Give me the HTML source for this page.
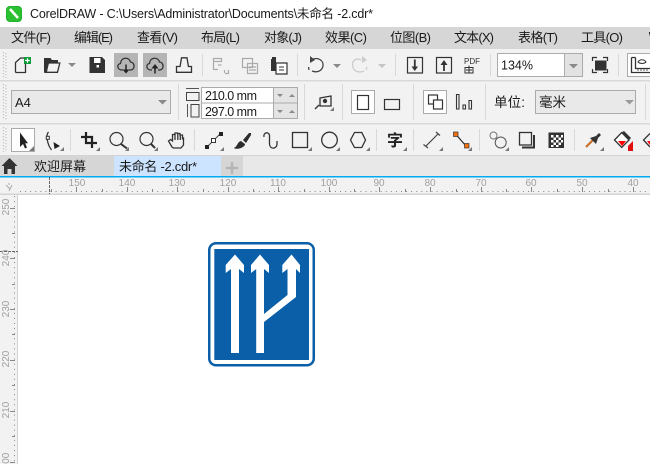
<!DOCTYPE html>
<html><head><meta charset="utf-8"><style>
html,body{margin:0;padding:0;background:#fff;width:650px;height:464px;overflow:hidden}
svg{display:block}
text{font-family:"Liberation Sans","Noto Sans CJK SC",sans-serif;fill:#1a1a1a}
.m{font-size:13px}
.r{font-size:10px;fill:#a0a0a0;text-anchor:middle}
.k{fill:none;stroke:#333;stroke-width:1.3}
.g{fill:none;stroke:#aaa;stroke-width:1.2}
.t{fill:#777}
.s{stroke:#d8d8d8;stroke-width:1}
</style></head><body>
<svg width="650" height="464" viewBox="0 0 650 464" xmlns="http://www.w3.org/2000/svg">
<rect width="650" height="464" fill="#fff"/>
<!-- title -->
<rect x="6" y="6" width="16" height="16" rx="4" fill="#1fb02c"/>
<rect x="7" y="7" width="14" height="14" rx="3" fill="#3c3" opacity=".6"/>
<path d="M10 9L18 18" stroke="#fff" stroke-width="2.6"/>
<text x="30" y="18" font-size="12.5" textLength="343" lengthAdjust="spacing">CorelDRAW - C:\Users\Administrator\Documents\未命名 -2.cdr*</text>
<!-- menu -->
<rect y="27" width="650" height="22" fill="#d6d6d6"/>
<g class="m">
<text class="m" x="11" y="42" textLength="40">文件(F)</text>
<text class="m" x="74" y="42" textLength="39">编辑(E)</text>
<text class="m" x="137" y="42" textLength="41">查看(V)</text>
<text class="m" x="201" y="42" textLength="39">布局(L)</text>
<text class="m" x="264" y="42" textLength="38">对象(J)</text>
<text class="m" x="325" y="42" textLength="42">效果(C)</text>
<text class="m" x="390" y="42" textLength="41">位图(B)</text>
<text class="m" x="454" y="42" textLength="40">文本(X)</text>
<text class="m" x="518" y="42" textLength="40">表格(T)</text>
<text class="m" x="581" y="42" textLength="42">工具(O)</text>
<text class="m" x="648" y="42">窗口</text>
</g>
<!-- toolbars bg -->
<rect y="49" width="650" height="106" fill="#f2f2f2"/>
<rect y="80" width="650" height="1.5" fill="#d9d9d9"/>
<rect y="123" width="650" height="1.5" fill="#d9d9d9"/>
<rect y="155" width="650" height="1.5" fill="#d4d4d4"/>
<path d="M3.500 52V78M6 53V78M3.500 84V120M6 85V120M3.500 127V152M6 128V152" stroke="#c4c4c4" stroke-width="1.200" stroke-dasharray="1.200 1.800"/>
<!-- row 1 -->
<path class="k" d="M15.500 72.500V62.500L20.500 58H24M25.500 64V72.500H15.500"/>
<rect x="24" y="57" width="7" height="7" fill="#0e9b3c"/><path d="M27.500 58.200V62.800M25.200 60.500H29.800" stroke="#fff" stroke-width="1.200"/>
<path d="M44 72V58H50.500L52 60H58V62.500H49L47 72Z" fill="#333"/><path class="k" d="M45 72.300L48.500 63H59.800L57.500 72.300Z"/>
<path d="M68 63H76L72 67Z" fill="#8a8a8a"/>
<path d="M89.500 57H102L105 60V73H89.500Z" fill="#333"/><rect x="94" y="58" width="6.500" height="5" fill="#fff"/><rect x="96.500" y="65" width="2.500" height="2.500" fill="#fff"/>
<rect x="114" y="53" width="24" height="24" fill="#b5b5b5"/><rect x="143" y="53" width="24" height="24" fill="#b5b5b5"/>
<path class="k" d="M123 70H122C117 70 116.500 64 120.500 63.500C121 57 129 56.500 130.500 62C135 62 135.500 70 130.500 70H129"/>
<path d="M126 64.500V70" stroke="#222" stroke-width="1.500"/><path d="M122.500 69.500H129.500L126 73.500Z" fill="#222"/>
<path class="k" d="M152 70H151C146 70 145.500 64 149.500 63.500C150 57 158 56.500 159.500 62C164 62 164.500 70 159.500 70H158"/>
<path d="M155 68V73.500" stroke="#222" stroke-width="1.500"/><path d="M151.500 68.500H158.500L155 64Z" fill="#222"/>
<path class="k" d="M180 67L181.500 57.800H187L188.500 67M180.500 66.500H176.500V72.300H191.500V66.500H188"/>
<path class="s" d="M202.500 54V76M297.500 54V76M395.500 54V76M490.500 54V76M618.500 54V76"/>
<path class="g" d="M213.500 58.500H221.500V61.500H213.500ZM213.500 61.500V69.500H218M218 65H221.500M224.500 70V73M225 73.500H228.500V70"/>
<path class="g" d="M242.500 58.500H252.500V67.500H242.500ZM247.500 63.500H257.500V73.500H247.500ZM249 67H256M249 70H256"/>
<path d="M271 59H276V71H271Z" fill="#333"/><path d="M276 63H287V74H276Z" fill="#fff" stroke="#333" stroke-width="1.200"/><path d="M279 67H284M279 70H284" stroke="#333"/><rect x="272" y="57" width="4" height="2" fill="#333"/>
<path d="M311 60C318 56 324 61 323 66C322 71 317 73 312 71M308.500 67L309 70" fill="none" stroke="#444" stroke-width="1.300"/><path d="M310 56V63L315 60Z" fill="#444"/>
<path d="M333 64H341L337 68Z" fill="#8a8a8a"/>
<path d="M361 60C355 57 351 62 353 67C354 72 360 73 364 71M367 67L366 70" fill="none" stroke="#ccc" stroke-width="1.300"/><path d="M362 56V63L367 60Z" fill="#ccc"/>
<path d="M378 64H386L382 68Z" fill="#c4c4c4"/>
<rect x="407.500" y="57.500" width="15" height="15.500" fill="none" stroke="#333" stroke-width="1.200"/><path d="M414.800 59.500V68" stroke="#333" stroke-width="1.800"/><path d="M411.500 66.500H418L414.800 71Z" fill="#333"/>
<rect x="436.500" y="57.500" width="15" height="15.500" fill="none" stroke="#333" stroke-width="1.200"/><path d="M444 64V71" stroke="#333" stroke-width="1.800"/><path d="M440.500 65H447.500L444 60Z" fill="#333"/>
<text x="464" y="64" font-size="8" style="fill:#333" textLength="16">PDF</text>
<rect x="465" y="67.500" width="8" height="5.500" fill="none" stroke="#333"/><path d="M469 65.500V73M466 70H472" stroke="#333"/>
<rect x="497.500" y="53.500" width="85" height="23" fill="#fff" stroke="#ababab"/>
<rect x="564" y="54" width="18" height="22" fill="#e2e2e2"/><path d="M564.500 54V76" stroke="#ababab"/>
<path d="M569 64H578L573.500 68.500Z" fill="#8a8a8a"/>
<text x="501" y="69.500" font-size="12.500">134%</text>
<rect x="595" y="60.500" width="11.500" height="10" fill="#333"/>
<path d="M592.500 61V57.500H597M603 57.500H607.500V61M607.500 69V72.500H603M597 72.500H592.500V69" fill="none" stroke="#333" stroke-width="1.200"/>
<rect x="627.500" y="53.500" width="24" height="23" fill="#fff" stroke="#ababab"/>
<path class="k" d="M631.500 57.500V72.500H650M635.500 57.500V68.500H650M631.500 57.500H635.500"/><path d="M638 62C640 59 644 59 646 62C644 64 640 64 638 62Z" fill="none" stroke="#333"/>
<path d="M638 68.500V71M641 68.500V71M644 68.500V71M647 68.500V71" stroke="#333" stroke-width=".8"/>
<!-- row 2 -->
<rect x="11.500" y="90.500" width="159" height="23" fill="#e9e9e9" stroke="#ababab"/>
<text x="15" y="107" font-size="13">A4</text>
<path d="M158 100H167L162.500 104.500Z" fill="#8a8a8a"/>
<path class="s" d="M178.500 84V120M304.500 84V120M342.500 84V120M413.500 84V120M485.500 84V120M645.500 84V120"/>
<path d="M186 88.500H199" stroke="#555"/><rect x="186.500" y="92.500" width="12.500" height="8" fill="none" stroke="#444"/>
<path d="M187.500 104V117" stroke="#555"/><rect x="191" y="104.500" width="8" height="12.500" fill="none" stroke="#444"/>
<rect x="201.500" y="87.500" width="96" height="15.500" fill="#e4e4e4" stroke="#ababab"/>
<rect x="201.500" y="103" width="96" height="15.500" fill="#e4e4e4" stroke="#ababab"/>
<rect x="202" y="88" width="71" height="14.500" fill="#fff"/><rect x="202" y="103.500" width="71" height="14.500" fill="#fff"/>
<path d="M273.500 87V119" stroke="#ababab"/>
<text x="205" y="100" font-size="12.500" textLength="52">210.0 mm</text>
<text x="205" y="116" font-size="12.500" textLength="52">297.0 mm</text>
<path d="M277 94H283L280 97ZM289 97H295L292 94ZM277 110H283L280 113ZM289 113H295L292 110Z" fill="#888"/>
<path class="k" d="M320 98L331 96V106H320ZM315 109L319 105" stroke-width="1.500"/><circle cx="325" cy="101" r="2.200" fill="#333"/>
<path d="M334 107V111H330Z" class="t"/>
<rect x="351.500" y="90.500" width="23" height="23" fill="#fff" stroke="#ababab"/>
<rect x="357.500" y="95.500" width="11" height="14" fill="none" stroke="#333" stroke-width="1.200"/>
<rect x="384.500" y="99.500" width="15" height="10" fill="none" stroke="#333" stroke-width="1.200"/>
<rect x="423.500" y="90.500" width="23" height="23" fill="#fff" stroke="#ababab"/>
<rect x="428.500" y="95" width="9" height="9" fill="none" stroke="#333" stroke-width="1.200"/><rect x="433.500" y="100" width="9" height="9" fill="#fff" stroke="#333" stroke-width="1.200"/>
<path d="M456.500 94.500H459V109H456.500ZM463 105H465.500V109H463ZM469 100.500H471.500V109H469Z" fill="none" stroke="#333" stroke-width="1.100"/>
<text x="494" y="107" font-size="13.500" textLength="31">单位:</text>
<rect x="535.500" y="90.500" width="100" height="23" fill="#e9e9e9" stroke="#ababab"/>
<text x="539" y="107" font-size="13.500">毫米</text>
<path d="M625 100H634L629.500 104.500Z" fill="#9a9a9a"/>
<!-- row 3 -->
<rect x="11.500" y="128.500" width="23" height="23" fill="#fff" stroke="#ababab"/>
<path d="M20 132.500V147L23 144L25 148.500L27 147.500L25.200 143.200H28Z" fill="#222"/>
<path class="t" d="M34 146V151H29ZM64 147V151H60ZM100 147V151H96ZM129 147V151H125ZM158 147V151H154ZM224 147V151H220ZM312 147V151H308ZM340 147V151H336ZM370 147V151H366ZM407 147V151H403ZM443 147V151H439ZM472 147V151H468ZM509 147V151H505ZM604 147V151H600"/>
<path class="k" d="M48.500 132C46 135 47 139 48 143C48.500 145 50 148 51.500 150" stroke-width="1"/><rect x="46.300" y="136.300" width="3" height="3" fill="#fff" stroke="#333"/>
<path d="M53.500 142L60 146L54.500 149Z" fill="#222"/>
<path class="s" d="M70.500 129V151M194.500 129V151M376.500 129V151M413.500 129V151M479.500 129V151M574.500 129V151"/>
<path d="M86 132V143H97M81 137H92V148" fill="none" stroke="#222" stroke-width="2.200"/>
<circle cx="116.500" cy="139" r="6.500" fill="none" stroke="#333" stroke-width="1.200"/><path d="M121 144L127 148.500" stroke="#333" stroke-width="2"/>
<circle cx="146.500" cy="139" r="6.500" fill="none" stroke="#333" stroke-width="1.200"/><path d="M151 144L155 148" stroke="#333" stroke-width="2"/>
<path class="k" d="M172 147L168.500 141L170.500 139.500L172.500 141V134.500H175V133H177.500V133.500H180V135H182.500V138.500L183.500 138V145L181 148H173.500ZM175 134.500V140M177.800 133.500V140M180.300 135V140" stroke-width="1.100"/>
<path d="M207 147L220 134" stroke="#444"/><rect x="205" y="145" width="4" height="4" fill="#222"/><rect x="211.500" y="138.500" width="4" height="4" fill="#fff" stroke="#333"/><rect x="219" y="132" width="4" height="4" fill="#222"/>
<path d="M241 148C238 149 235 149 234 148C238 146 237 142 241 141L245 144C245 146 243 147 241 148ZM243 140L249 133H251V135L246 143Z" fill="#2d2d2d"/>
<path class="k" d="M264 137C263 133 268 131 269.500 135V144C270 150 277 149 277 144V141"/>
<rect x="292.500" y="132.500" width="15" height="15" class="k"/>
<circle cx="329.500" cy="140" r="7.800" class="k"/>
<path class="k" d="M350.500 140L354.500 132.500H361.800L365.500 140L361.800 147.500H354.500Z"/>
<text x="387" y="146" font-size="16" font-weight="700" textLength="16" style="fill:#222">字</text>
<path d="M426 146L438 134M423.500 144.500L428 148M436 132L440 135.500" fill="none" stroke="#444" stroke-width="1.200"/>
<path d="M456 134.500L466 146" stroke="#333" stroke-width="1.300"/><rect x="453.500" y="132" width="4.500" height="4.500" fill="#f07010" stroke="#333" stroke-width=".7"/><rect x="464.500" y="143.500" width="4.500" height="4.500" fill="#f07010" stroke="#333" stroke-width=".7"/>
<circle cx="493.500" cy="135.500" r="3.500" fill="none" stroke="#777"/><circle cx="500.700" cy="142.500" r="5.500" fill="none" stroke="#555"/>
<rect x="519.500" y="132.500" width="12" height="12.500" class="k"/><path d="M534 135V147.500H522" fill="none" stroke="#333" stroke-width="2"/>
<rect x="548.500" y="132.500" width="15.500" height="15.500" fill="#333"/>
<path d="M551 135h2.500v2.500H551zM556 135h2.500v2.500H556zM561 135h2v2.500h-2zM553.500 137.500h2.500V140h-2.500zM558.500 137.500h2.500V140h-2.500zM551 140h2.500v2.500H551zM556 140h2.500v2.500H556zM561 140h2v2.500h-2zM553.500 142.500h2.500V145h-2.500zM558.500 142.500h2.500V145h-2.500zM551 145h2.500v2h-2.500zM556 145h2.500v2H556z" fill="#fff"/>
<path d="M586 147L593 140" stroke="#c8702c" stroke-width="2.200"/><path d="M590 138L596 136L599 133L601 135L598 138L596 144Z" fill="#333"/>
<path d="M614.500 140L621.700 132.500L629 140L621.700 147.500Z" fill="#fff" stroke="#333" stroke-width="1.300"/><path d="M618 141H626L622 146Z" fill="#f00"/><path d="M621.700 132.500L629 140L631 138L624 131Z" fill="#333"/><path d="M628 146L633 141V151H628Z" fill="#e01010"/>
<path class="k" d="M650 133.500L643.500 140L650 147"/><path d="M647 141H650V145Z" fill="#f00"/>
<!-- tabs -->
<rect y="156" width="650" height="20" fill="#e8e8e8"/>
<rect y="156" width="114" height="20" fill="#d6d6d6"/>
<rect x="114" y="156" width="107" height="20" fill="#cce4ff"/>
<rect x="221" y="156" width="22" height="20" fill="#d6d6d6"/>
<path d="M9.500 158L1.500 166H4V174H7.500V169H11.500V174H15V166H17.500Z" fill="#333"/>
<text x="34" y="171" font-size="13" textLength="52">欢迎屏幕</text>
<text x="119" y="171" font-size="13" textLength="78">未命名 -2.cdr*</text>
<path d="M232 162V174M226 168H238" stroke="#b4b4b4" stroke-width="2.500"/>
<rect y="176" width="650" height="1.500" fill="#00aaf5"/>
<!-- rulers -->
<rect y="177.500" width="650" height="16.500" fill="#f2f2f2"/>
<rect y="194" width="18" height="270" fill="#f2f2f2"/>
<rect y="193.500" width="650" height="1.500" fill="#d4d4d4"/>
<rect x="17" y="194" width="1" height="270" fill="#d4d4d4"/>
<path d="M6 185L10 189M12 185L9 191M9 183V185" stroke="#aaa" fill="none"/>
<g>
<text class="r" x="77" y="186">150</text><text class="r" x="127" y="186">140</text><text class="r" x="177" y="186">130</text><text class="r" x="228" y="186">120</text><text class="r" x="278" y="186">110</text><text class="r" x="329" y="186">100</text><text class="r" x="379" y="186">90</text><text class="r" x="430" y="186">80</text><text class="r" x="481" y="186">70</text><text class="r" x="531" y="186">60</text><text class="r" x="582" y="186">50</text><text class="r" x="633" y="186">40</text>
</g>
<path d="M20 191.500H650" stroke="#888" stroke-dasharray="1 4.080"/>
<path d="M76.500 187V192M127.500 187V192M177.500 187V192M228.500 187V192M278.500 187V192M329.500 187V192M379.500 187V192M430.500 187V192M481.500 187V192M531.500 187V192M582.500 187V192M633.500 187V192" stroke="#888"/>
<path d="M51.500 189V192M102.500 189V192M152.500 189V192M203.500 189V192M253.500 189V192M304.500 189V192M354.500 189V192M405.500 189V192M456.500 189V192M506.500 189V192M557.500 189V192M608.500 189V192" stroke="#888"/>
<path d="M49.500 177V194" stroke="#666" stroke-dasharray="3 1"/>
<path d="M14.500 196V464" stroke="#888" stroke-dasharray="1 4.080"/>
<path d="M10 208.500H15M10 258.500H15M10 309.500H15M10 360.500H15M10 411.500H15M10 462.500H15M12 233.500H15M12 284.500H15M12 334.500H15M12 385.500H15M12 436.500H15" stroke="#888"/>
<path d="M0 251.500H18" stroke="#666" stroke-dasharray="3 1"/>
<text class="r" transform="translate(9 207) rotate(-90)" x="0" y="0">250</text>
<text class="r" transform="translate(9 258) rotate(-90)" x="0" y="0">240</text>
<text class="r" transform="translate(9 309) rotate(-90)" x="0" y="0">230</text>
<text class="r" transform="translate(9 359) rotate(-90)" x="0" y="0">220</text>
<text class="r" transform="translate(9 410) rotate(-90)" x="0" y="0">210</text>
<text class="r" transform="translate(9 461) rotate(-90)" x="0" y="0">200</text>
<!-- sign -->
<rect x="208" y="242" width="107" height="124.500" rx="8" fill="#0a5fa8"/>
<rect x="210.500" y="244.500" width="102" height="119.500" rx="5.500" fill="#fff"/>
<rect x="214.300" y="249" width="94.700" height="111" fill="#0a5fa8"/>
<path fill="#fff" d="M231 353V269L225.700 273V265L235 254.500L244 265V273L239 269V353Z"/>
<path fill="#fff" d="M256.200 353V269L251 273V265L260 254.500L269 265V273L264 269V314L287.500 295V269L282.300 273V265L291.500 254.500L300 265V273L296 269V297L264 322V353Z"/>
</svg>
</body></html>
